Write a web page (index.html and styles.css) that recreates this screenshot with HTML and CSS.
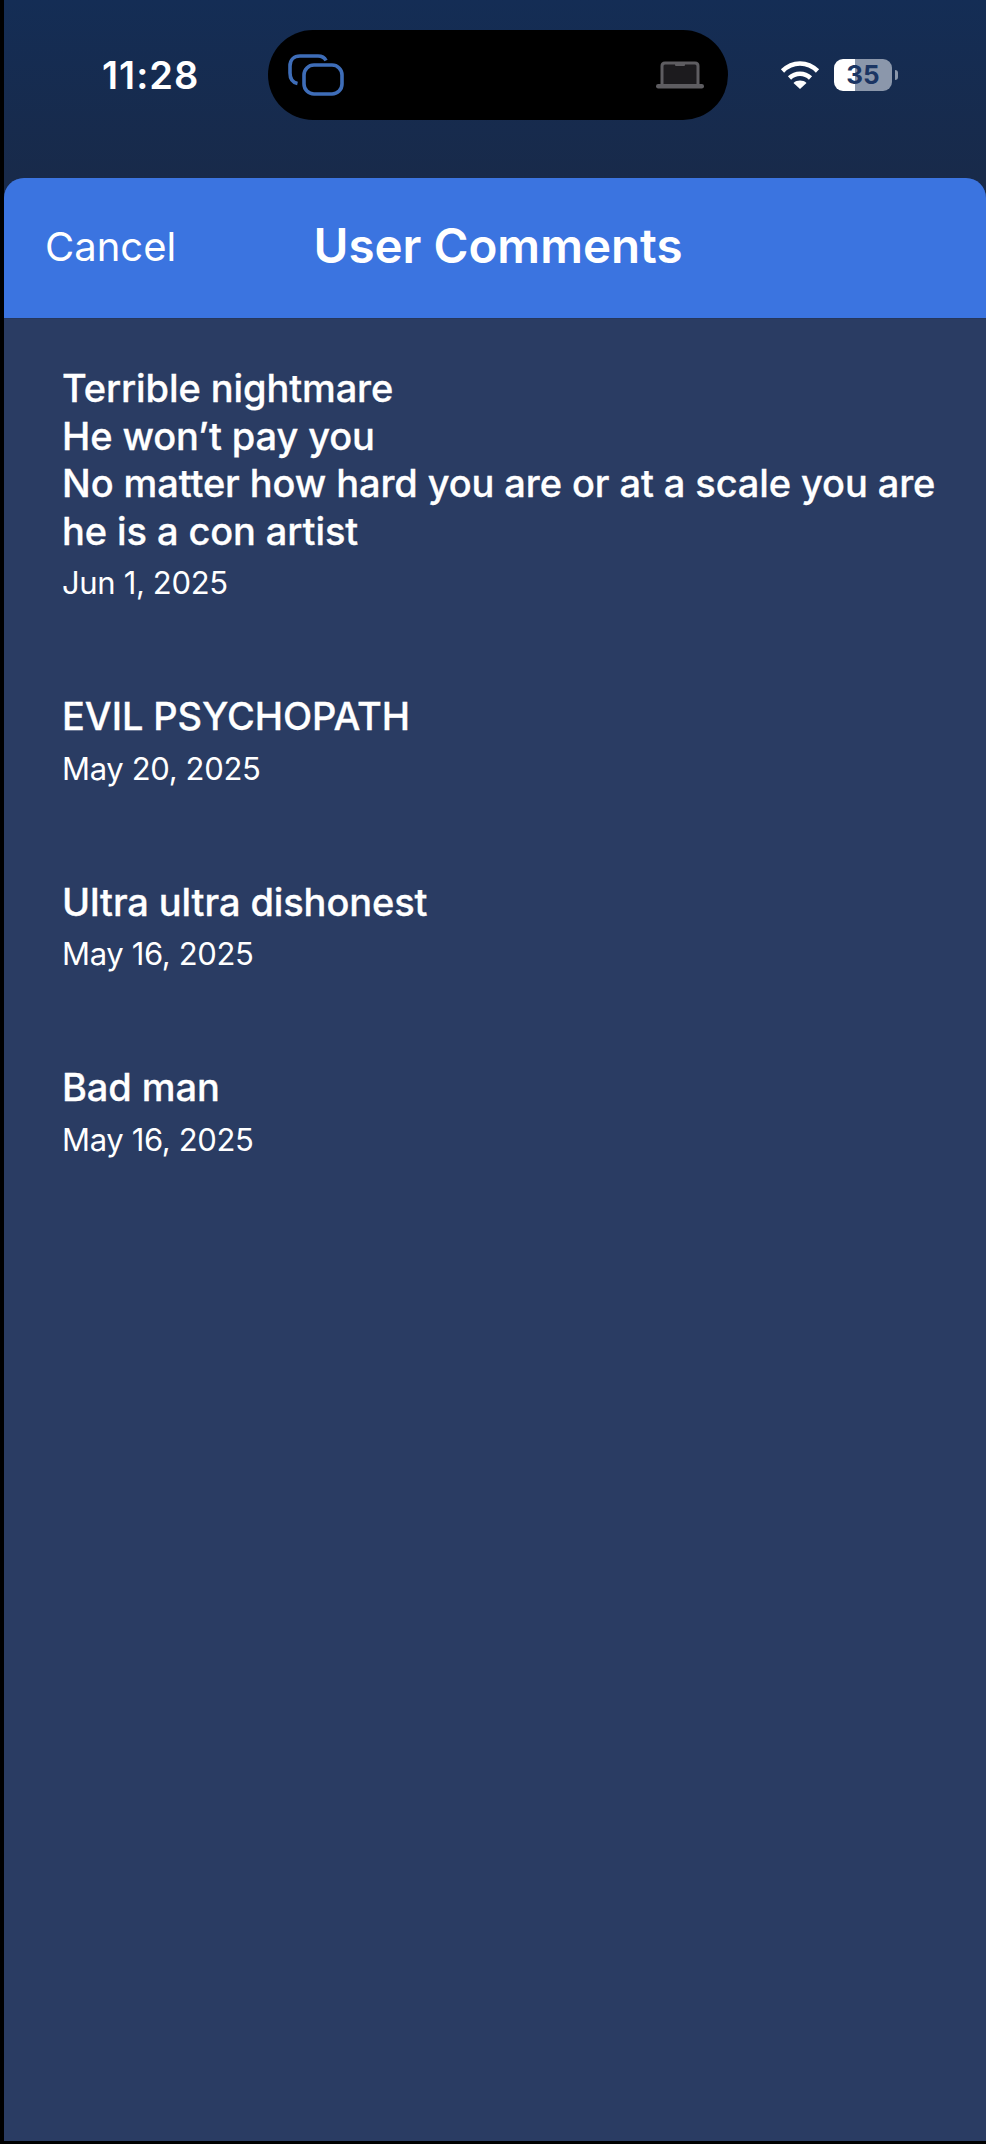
FILE: index.html
```html
<!DOCTYPE html>
<html lang="en">
<head>
  <meta charset="UTF-8" />
  <meta name="viewport" content="width=device-width, initial-scale=1.0"/>
  <title>User Comments</title>
  <link rel="stylesheet" href="styles.css">
</head>
<body>
  <div class="screen">
    <div class="status-bar">
      <span class="time">11:28</span>
      <div class="island">
        <svg class="icon-windows" viewBox="0 0 56 42" width="56" height="42" fill="none" stroke="#3e6db8" stroke-width="3.6">
          <path d="M38 6.5C36.5 3.5 34 2 30 2H12C6 2 2 6 2 12V19C2 25 5 28.500 9.500 29.500"/>
          <rect x="16" y="11" width="38" height="29" rx="10"/>
        </svg>
        <svg class="icon-laptop" viewBox="0 0 48 28" width="48" height="28">
          <path d="M6 25V5C6 3 7 2 9 2H39C41 2 42 3 42 5V25" fill="#1c1b1e" stroke="#5e5d61" stroke-width="3"/>
          <rect x="19" y="2" width="10" height="3" rx="1" fill="#5e5d61"/>
          <rect x="0" y="23" width="48" height="4.500" rx="2.200" fill="#5e5d61"/>
        </svg>
      </div>
      <div class="status-icons">
        <svg class="icon-wifi" viewBox="0 0 40 30" width="40" height="30" fill="none" stroke="#fff" stroke-width="4.600">
          <path d="M2.500 11C12.500 1 27.500 1 37.500 11"/>
          <path d="M9.500 18C15.500 12.300 24.500 12.300 30.500 18"/>
          <path d="M20 29L13.500 23C17 19.800 23 19.800 26.500 23Z" fill="#fff" stroke="none"/>
        </svg>
        <div class="battery">
          <div class="battery-body"><span>35</span></div>
          <div class="battery-cap"></div>
        </div>
      </div>
    </div>

    <div class="sheet">
      <div class="sheet-header">
        <span class="cancel">Cancel</span>
        <h2>User Comments</h2>
      </div>
      <div class="comments">
        <div class="comment">
          <div class="comment-text">Terrible nightmare<br>He won’t pay you<br>No matter how hard you are or at a scale you are<br>he is a con artist</div>
          <div class="comment-date">Jun 1, 2025</div>
        </div>
        <div class="comment">
          <div class="comment-text">EVIL PSYCHOPATH</div>
          <div class="comment-date">May 20, 2025</div>
        </div>
        <div class="comment">
          <div class="comment-text">Ultra ultra dishonest</div>
          <div class="comment-date">May 16, 2025</div>
        </div>
        <div class="comment">
          <div class="comment-text">Bad man</div>
          <div class="comment-date">May 16, 2025</div>
        </div>
      </div>
    </div>
  </div>
</body>
</html>
```

FILE: styles.css
```css
html, body {
  height: 100%;
}
body {
  margin: 0;
  background: #000;
  font-family: Inter, 'Liberation Sans', sans-serif;
  color: #fff;
}
.screen {
  height: 2141px;
  margin-left: 4px;
  display: flex;
  flex-direction: column;
  background: linear-gradient(#142d55, #182a4a 178px);
}
.status-bar {
  height: 178px;
  flex-shrink: 0;
  display: flex;
  align-items: flex-start;
  box-sizing: border-box;
  padding-top: 30px;
}
.time {
  width: 264px;
  box-sizing: border-box;
  padding: 0 0 0 98px;
  font-size: 38px;
  font-weight: 600;
  letter-spacing: 1px;
  line-height: 90px;
  height: 90px;
}
.island {
  width: 460px;
  height: 90px;
  background: #000;
  border-radius: 45px;
  display: flex;
  align-items: center;
  justify-content: space-between;
  box-sizing: border-box;
  padding: 0 24px 0 20px;
}
.status-icons {
  height: 90px;
  display: flex;
  align-items: center;
  margin-left: 52px;
  gap: 14px;
}
.battery {
  display: flex;
  align-items: center;
  gap: 3px;
}
.battery-body {
  width: 58px;
  height: 32px;
  border-radius: 9px;
  background: linear-gradient(90deg, #fff 36%, #8b97ab 36%);
  color: #1b3563;
  font-size: 26px;
  font-weight: 700;
  line-height: 32px;
  text-align: center;
}
.battery-cap {
  width: 3px;
  height: 10px;
  border-radius: 0 3px 3px 0;
  background: #8b97ab;
}
.sheet {
  flex: 1;
  display: flex;
  flex-direction: column;
  background: #2a3c63;
  border-radius: 20px 20px 0 0;
  overflow: hidden;
}
.sheet-header {
  height: 141px;
  flex-shrink: 0;
  position: relative;
  display: flex;
  align-items: center;
  justify-content: center;
  box-sizing: border-box;
  padding: 0 0 5px 6px;
  background: #3b74e0;
  border-bottom: 1px solid #25375c;
}
.cancel {
  position: absolute;
  left: 41px;
  margin-top: 2px;
  font-size: 40px;
}
.sheet-header h2 {
  margin: 0;
  font-size: 47.5px;
  font-weight: 600;
}
.comments {
  padding: 46px 20px 46px 58px;
}
.comment {
  margin-bottom: 90px;
}
.comment-text {
  font-size: 38px;
  font-weight: 500;
  letter-spacing: -0.1px;
  -webkit-text-stroke: 0.3px #fff;
  line-height: 47.500px;
}
.comment-date {
  margin-top: 8px;
  font-size: 31px;
  letter-spacing: -0.35px;
  line-height: 40px;
}
```
